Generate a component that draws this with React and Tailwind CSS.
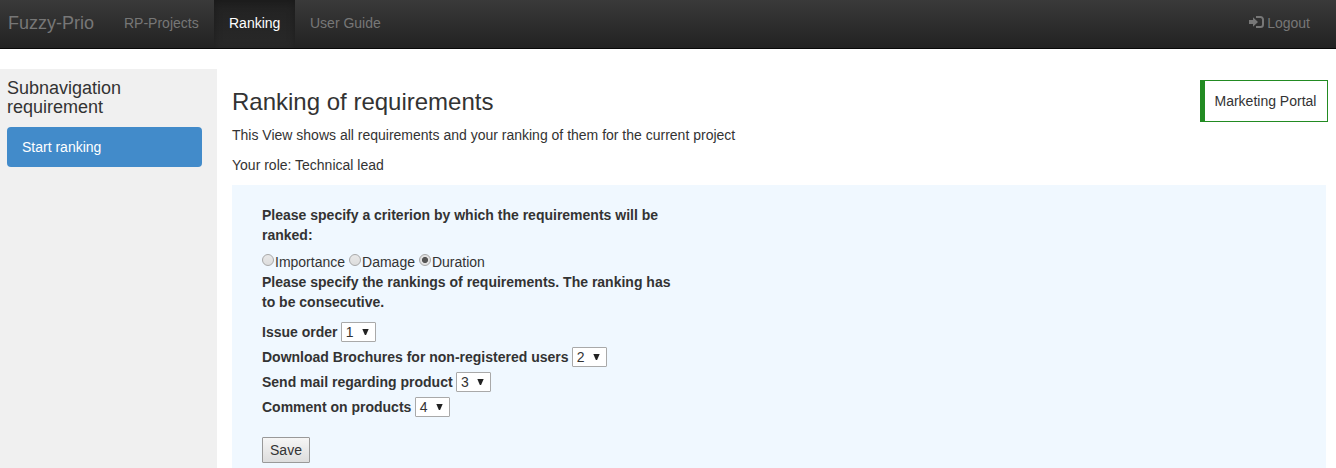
import React, { useState } from "react";

const criteria = ["Importance", "Damage", "Duration"];

const requirements = [
  "Issue order",
  "Download Brochures for non-registered users",
  "Send mail regarding product",
  "Comment on products",
];

function LogInIcon() {
  return (
    <svg width="15" height="13" viewBox="0 0 15 13" className="mr-[3px] shrink-0" fill="none">
      <path d="M0 4h4V1.2L9 6 4 10.8V8H0z" fill="currentColor" />
      <path d="M7 1h4.5A2.5 2.5 0 0 1 14 3.5v5a2.5 2.5 0 0 1-2.5 2.5H7" stroke="currentColor" strokeWidth="2" />
    </svg>
  );
}

function Navbar() {
  return (
    <nav className="flex h-[49px] items-stretch border-b border-[#080808] bg-linear-to-b from-[#3a3a3a] to-[#222222] text-[14px] leading-5 text-[#777777]">
      <a className="w-[109px] pl-2 pt-[13px] text-[18px]">Fuzzy-Prio</a>
      <a className="w-[105px] px-[15px] pt-[13px] whitespace-nowrap">RP-Projects</a>
      <a className="w-[81px] bg-linear-to-b from-[#222222] to-[#282828] px-[15px] pt-[13px] text-white shadow-[inset_0_3px_9px_rgba(0,0,0,0.25)]">
        Ranking
      </a>
      <a className="px-[15px] pt-[13px]">User Guide</a>
      <a className="ml-auto flex items-start pr-[26px] pt-[13px]">
        <span className="pt-[3px]">
          <LogInIcon />
        </span>
        Logout
      </a>
    </nav>
  );
}

function RankSelect({ label, value }) {
  return (
    <div className="flex h-[25px] items-start gap-[3.3px]">
      <label className="font-bold">{label}</label>
      <button className="flex h-5 w-[35px] items-center justify-between rounded-[1px] border border-[#a9a9a9] bg-white pl-[4px] pr-[6px]">
        <span>{value}</span>
        <svg width="7" height="6" viewBox="0 0 7 6" className="-mt-px">
          <path d="M0.3 0h6.4L4.1 6H2.9z" fill="#222222" />
        </svg>
      </button>
    </div>
  );
}

export default function App() {
  const [criterion, setCriterion] = useState("Duration");

  return (
    <div className="flex h-[468px] flex-col overflow-hidden bg-white font-['Liberation_Sans',Arial,sans-serif] text-[14px] leading-5 text-[#333333]">
      <Navbar />
      <div className="flex min-h-0 flex-1 pt-5">
        <aside className="w-[217px] shrink-0 bg-[#f0f0f0] pl-[7px] pr-[15px] pt-[10px]">
          <h4 className="text-[18px] leading-[19px]">Subnavigation requirement</h4>
          <a className="mt-[10px] block h-10 rounded-[4px] bg-[#428bca] px-[15px] py-[10px] text-white">Start ranking</a>
        </aside>
        <main className="min-w-0 flex-1 pl-[15px]">
          <div className="flex h-[56px] items-start justify-between pr-2">
            <h3 className="pt-5 text-[24px] leading-[26px]">Ranking of requirements</h3>
            <div className="mt-[11px] h-[42px] w-[128px] whitespace-nowrap border border-l-[5px] border-[#228b22] py-[10px] pl-[9.5px]">
              Marketing Portal
            </div>
          </div>
          <p>This View shows all requirements and your ranking of them for the current project</p>
          <p className="mt-[10px]">Your role: Technical lead</p>
          <form className="mr-[10px] mt-[10px] h-[300px] bg-[#f0f8ff] pl-[30px] pt-5">
            <p className="w-[420px] font-bold">Please specify a criterion by which the requirements will be ranked:</p>
            <div className="mt-[5px] flex h-[22px] gap-1">
              {criteria.map((name) => (
                <label key={name} className="flex items-start">
                  <input
                    type="radio"
                    name="criterion"
                    checked={criterion === name}
                    onChange={() => setCriterion(name)}
                    className="mr-px mt-1 h-3 w-3 appearance-none rounded-full border border-[#a8a8a8] bg-linear-to-b from-[#e8e8e8] to-[#dddddd] checked:bg-[radial-gradient(circle,#555_0_2.7px,#e2e2e2_3.4px)]"
                  />
                  <span className="pt-[2px]">{name}</span>
                </label>
              ))}
            </div>
            <p className="w-[420px] font-bold">Please specify the rankings of requirements. The ranking has to be consecutive.</p>
            <div className="mt-[10px]">
              {requirements.map((label, i) => (
                <RankSelect key={label} label={label} value={i + 1} />
              ))}
            </div>
            <button
              type="button"
              className="mt-[15px] h-[26px] w-12 rounded-[1px] border border-[#999999] bg-linear-to-b from-[#f6f6f6] to-[#dddddd]"
            >
              Save
            </button>
          </form>
        </main>
      </div>
    </div>
  );
}
